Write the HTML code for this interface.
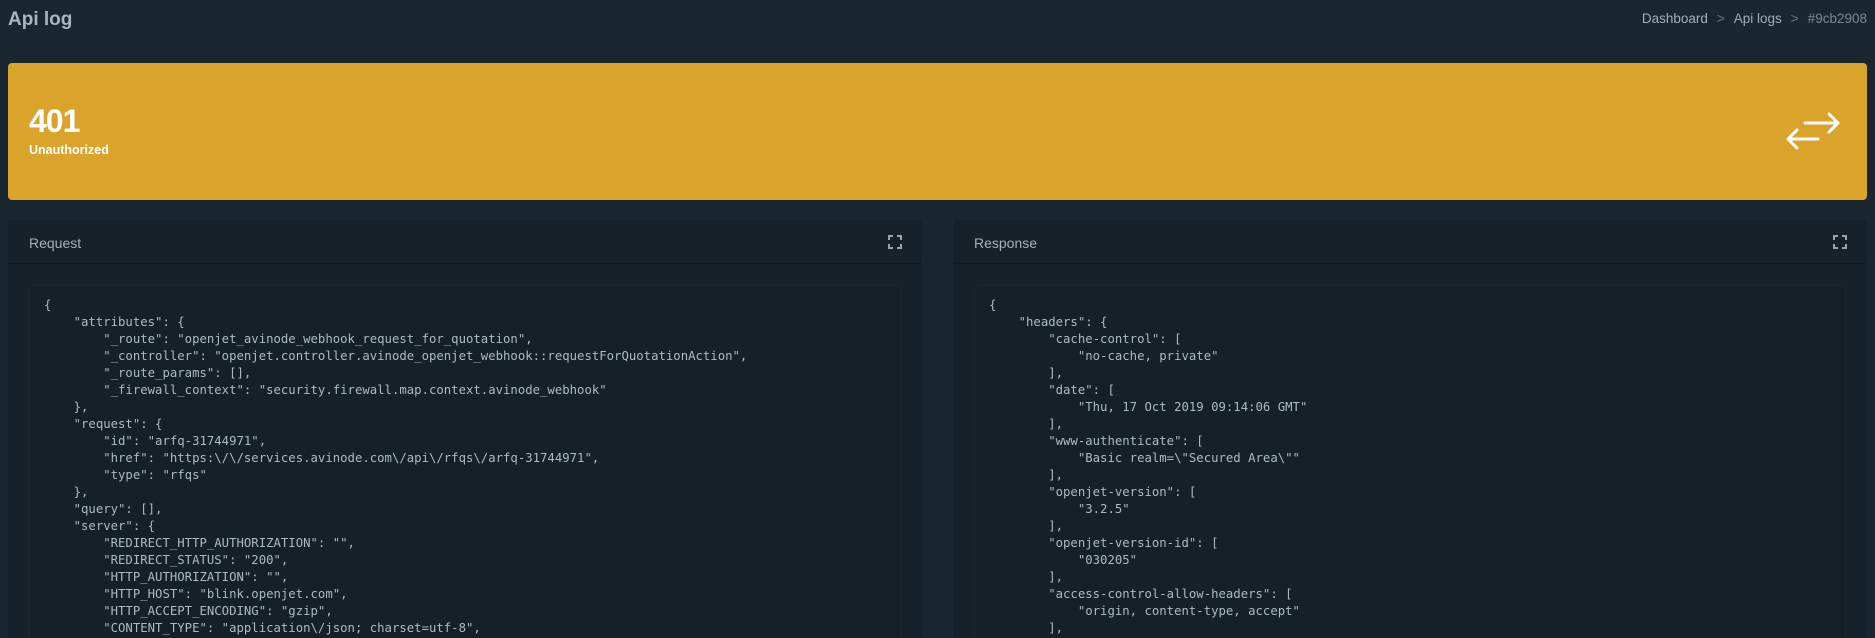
<!DOCTYPE html>
<html><head><meta charset="utf-8"><style>
*{margin:0;padding:0;box-sizing:border-box}
html{width:1875px;height:638px;overflow:hidden}
body{width:1875px;height:638px;overflow:hidden;background:#1a2630;font-family:"Liberation Sans",sans-serif;position:relative}
.title{position:absolute;left:8px;top:9px;font-size:19px;font-weight:bold;color:#aab6be}
.bc{position:absolute;right:8px;top:11px;font-size:13.5px;color:#a3aeb6}
.bc .s{color:#6b7781;margin:0 9px}
.bc .l{color:#7d8992}
.banner{position:absolute;left:8px;top:63px;width:1859px;height:137px;background:#daa32c;border-radius:4px}
.code401{position:absolute;left:21px;top:40px;font-size:32px;font-weight:bold;color:#fff;letter-spacing:-1px}
.unauth{position:absolute;left:21px;top:80px;font-size:12.5px;font-weight:bold;color:#fff}
.card{position:absolute;top:220px;width:914px;height:418px;background:#16212a;border-radius:4px 4px 0 0;overflow:hidden}
.hd{height:44px;border-bottom:1px solid #121b22;position:relative}
.hd span{position:absolute;left:21px;top:15px;font-size:14px;color:#a6b0b7}
.exp{position:absolute;right:20px;top:15px}
.box{position:absolute;left:21px;top:65px;width:872px;height:400px;border:1px solid #1b2630;border-radius:4px;background:#152029;overflow:hidden}
pre{position:absolute;left:14px;top:11px;font-family:"DejaVu Sans Mono",monospace;font-size:12.3px;line-height:17px;color:#aebac2}
</style></head><body>
<div class="title">Api log</div>
<div class="bc">Dashboard<span class="s">&gt;</span>Api logs<span class="s">&gt;</span><span class="l">#9cb2908</span></div>
<div class="banner"><div class="code401">401</div><div class="unauth">Unauthorized</div>
<svg style="position:absolute;left:1777px;top:35px" width="60" height="60" viewBox="1785 98 60 60" fill="none" stroke="#fff" stroke-width="3" stroke-linecap="round" stroke-linejoin="round"><path d="M1805 123H1838M1829 114L1838 123L1829 132M1818 139H1788M1797 130L1788 139L1797 148"/></svg></div>
<div class="card" style="left:8px"><div class="hd"><span>Request</span><svg class="exp" width="14" height="14" viewBox="0 0 14 14" fill="none" stroke="#9aa5ad" stroke-width="2"><path d="M1 5V1H5M9 1H13V5M13 9V13H9M5 13H1V9"/></svg></div>
<div class="box"><pre>{
    "attributes": {
        "_route": "openjet_avinode_webhook_request_for_quotation",
        "_controller": "openjet.controller.avinode_openjet_webhook::requestForQuotationAction",
        "_route_params": [],
        "_firewall_context": "security.firewall.map.context.avinode_webhook"
    },
    "request": {
        "id": "arfq-31744971",
        "href": "https:\/\/services.avinode.com\/api\/rfqs\/arfq-31744971",
        "type": "rfqs"
    },
    "query": [],
    "server": {
        "REDIRECT_HTTP_AUTHORIZATION": "",
        "REDIRECT_STATUS": "200",
        "HTTP_AUTHORIZATION": "",
        "HTTP_HOST": "blink.openjet.com",
        "HTTP_ACCEPT_ENCODING": "gzip",
        "CONTENT_TYPE": "application\/json; charset=utf-8",
        "CONTENT_LENGTH": "146",</pre></div></div>
<div class="card" style="left:953px"><div class="hd"><span>Response</span><svg class="exp" width="14" height="14" viewBox="0 0 14 14" fill="none" stroke="#9aa5ad" stroke-width="2"><path d="M1 5V1H5M9 1H13V5M13 9V13H9M5 13H1V9"/></svg></div>
<div class="box"><pre>{
    "headers": {
        "cache-control": [
            "no-cache, private"
        ],
        "date": [
            "Thu, 17 Oct 2019 09:14:06 GMT"
        ],
        "www-authenticate": [
            "Basic realm=\"Secured Area\""
        ],
        "openjet-version": [
            "3.2.5"
        ],
        "openjet-version-id": [
            "030205"
        ],
        "access-control-allow-headers": [
            "origin, content-type, accept"
        ],
        "access-control-allow-origin": [</pre></div></div>
</body></html>
